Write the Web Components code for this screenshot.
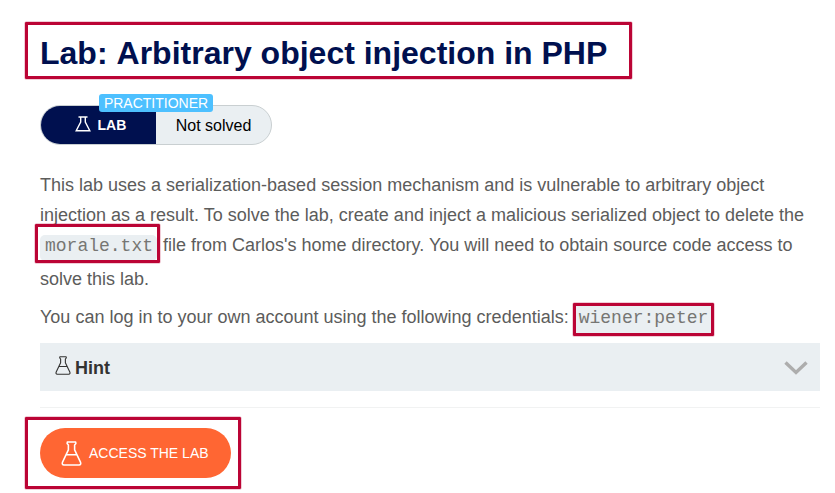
<!DOCTYPE html>
<html lang="en"><head><meta charset="utf-8"><title>Lab</title>
<style>
body{margin:0;background:#fff;font-family:"Liberation Sans",Arial,sans-serif;width:835px;height:493px;overflow:hidden}
</style></head><body>
<lab-page></lab-page>
<script>
const define=(name,html)=>customElements.define(name,class extends HTMLElement{
  constructor(){super();const t=document.createElement('template');t.innerHTML=html;this.attachShadow({mode:'open'}).append(t.content.cloneNode(true));}
});
// Highlight frame laid over its content; --t/--r/--b/--l set how far it reaches out.
define('focus-frame',`<style>
:host{display:block;position:relative}
:host([inline]){display:inline-block}
i{position:absolute;top:var(--t);right:var(--r);bottom:var(--b);left:var(--l);border:3px solid #bb0435;border-radius:1px;box-sizing:border-box;box-shadow:0 0 0 .5px #b9043766;pointer-events:none}
</style><slot></slot><i></i>`);
define('code-chip',`<style>
:host{display:block;box-sizing:border-box;height:26px;line-height:22px;padding:0 4px 0 5px;border-radius:5px;background:#eaeff2;font-family:"Liberation Mono","Courier New",monospace;font-size:18px;color:#767673}
</style><slot></slot>`);
define('flask-icon',`<style>:host{display:block}svg{display:block;width:100%;height:100%}</style>
<svg viewBox="0 0 20 24" fill="none" stroke="currentColor" stroke-linejoin="round" stroke-linecap="round" style="stroke-width:var(--sw,1.6)"><path d="M6 1h8l.2 1.400-1.200 1.400v4.700l5.600 11.700q1 2.600-1.400 2.800H2.800Q.4 22.800 1.400 20.200L7 8.500V3.800L5.800 2.400 6 1M4.800 13.200h10.400"/></svg>`);
define('flask-outline',`<style>:host{display:block}svg{display:block;width:100%;height:100%}</style>
<svg viewBox="0 0 16 16" fill="none" stroke="currentColor" stroke-width="1.400"><path d="M3.500 1h9M5.700 1v5L1.200 14.700h13.600L10.300 6V1"/></svg>`);
define('lab-status',`<style>
:host{display:flex;position:relative;box-sizing:border-box;width:232px;height:40px;border:1px solid #c9cfd1;border-radius:20px;background:#eaeff2}
.lab{display:flex;align-items:center;width:115px;box-sizing:border-box;padding-left:34px;border-radius:19px 0 0 19px;background:#00104f;color:#fff;font-weight:bold;font-size:14px;line-height:38px}
flask-outline{width:16px;height:16px;margin-right:6.500px;margin-top:-2px}
.state{flex:1;text-align:center;font-size:16px;line-height:39px;color:#000}
.level{position:absolute;left:58px;top:-12px;width:114px;height:18px;border-radius:3px;background:#4dc0ff;color:#fff;font-size:14px;line-height:18px;text-align:center}
</style><div class="lab"><flask-outline></flask-outline><span><slot></slot></span></div><div class="state"><slot name="state"></slot></div><div class="level"><slot name="level"></slot></div>`);
define('hint-bar',`<style>
:host{display:flex;align-items:center;box-sizing:border-box;height:48px;padding:0 12px 0 15px;background:#eaeff2;font-size:18px;font-weight:bold;color:#333332}
flask-icon{width:16px;height:19px;margin:-4px 4px 0 0;--sw:1.4}
span{flex:1;line-height:48px;padding-top:2px}
.v{width:24px;height:14px;display:block;margin-top:1px}
</style><flask-icon></flask-icon><span><slot></slot></span><svg class="v" viewBox="0 0 24 14" fill="none" stroke="#adadad" stroke-width="3.400"><path d="M1.500 1.500 12 11.500 22.500 1.500"/></svg>`);
define('access-button',`<style>
:host{display:flex;align-items:center;box-sizing:border-box;width:191px;height:50px;border-radius:25px;background:#ff6633;color:#fff;padding-left:21px;font-size:14px}
flask-icon{width:21px;height:25px;margin-right:7px;--sw:1.500}
</style><flask-icon></flask-icon><span><slot></slot></span>`);
define('lab-page',`<style>
:host{display:block;padding:33px 15px 0 40px}
h1{margin:0;font-size:32px;line-height:40px;height:40px;color:#00104f;white-space:nowrap}
h1 span{letter-spacing:.1px}
.title{width:567px;--t:-11px;--l:-15px;--r:-25px;--b:-6px}
lab-status{margin-top:32px}
.text{margin-top:25px;font-size:18px;color:#5c5c5b}
.line{height:30px;line-height:30px;white-space:nowrap;display:flex;align-items:flex-start}
.line.tall{height:34px}
.line.creds{margin-top:8px}
.gap{margin-left:6px}
.a{--t:-11px;--l:-5px;--r:-3px;--b:-2px;margin-top:5px}
.b{--t:-2px;--l:-1px;--r:-2px;--b:-1px;margin:3px 0 0 5px}
.b code-chip{height:30px;line-height:27px}
hint-bar{margin-top:11px}
hr{margin:16px 0 20px;border:0;height:1px;background:#f1f2f2}
.cta{width:191px;--t:-11px;--l:-15px;--r:-10px;--b:-11px}
</style>
<focus-frame class="title"><h1>Lab:<span> </span>Arbitrary object injection in PHP</h1></focus-frame>
<lab-status>LAB<span slot="state">Not solved</span><span slot="level">PRACTITIONER</span></lab-status>
<div class="text">
<div class="line">This lab uses a serialization-based session mechanism and is vulnerable to arbitrary object</div>
<div class="line">injection as a result. To solve the lab, create and inject a malicious serialized object to delete the</div>
<div class="line tall"><focus-frame inline class="a"><code-chip>morale.txt</code-chip></focus-frame><span class="gap">file from Carlos's home directory. You will need to obtain source code access to</span></div>
<div class="line">solve this lab.</div>
<div class="line creds"><span>You can log in to your own account using the following credentials:</span><focus-frame inline class="b"><code-chip>wiener:peter</code-chip></focus-frame></div>
</div>
<hint-bar>Hint</hint-bar>
<hr>
<focus-frame class="cta"><access-button>ACCESS THE LAB</access-button></focus-frame>`);
</script></body></html>
